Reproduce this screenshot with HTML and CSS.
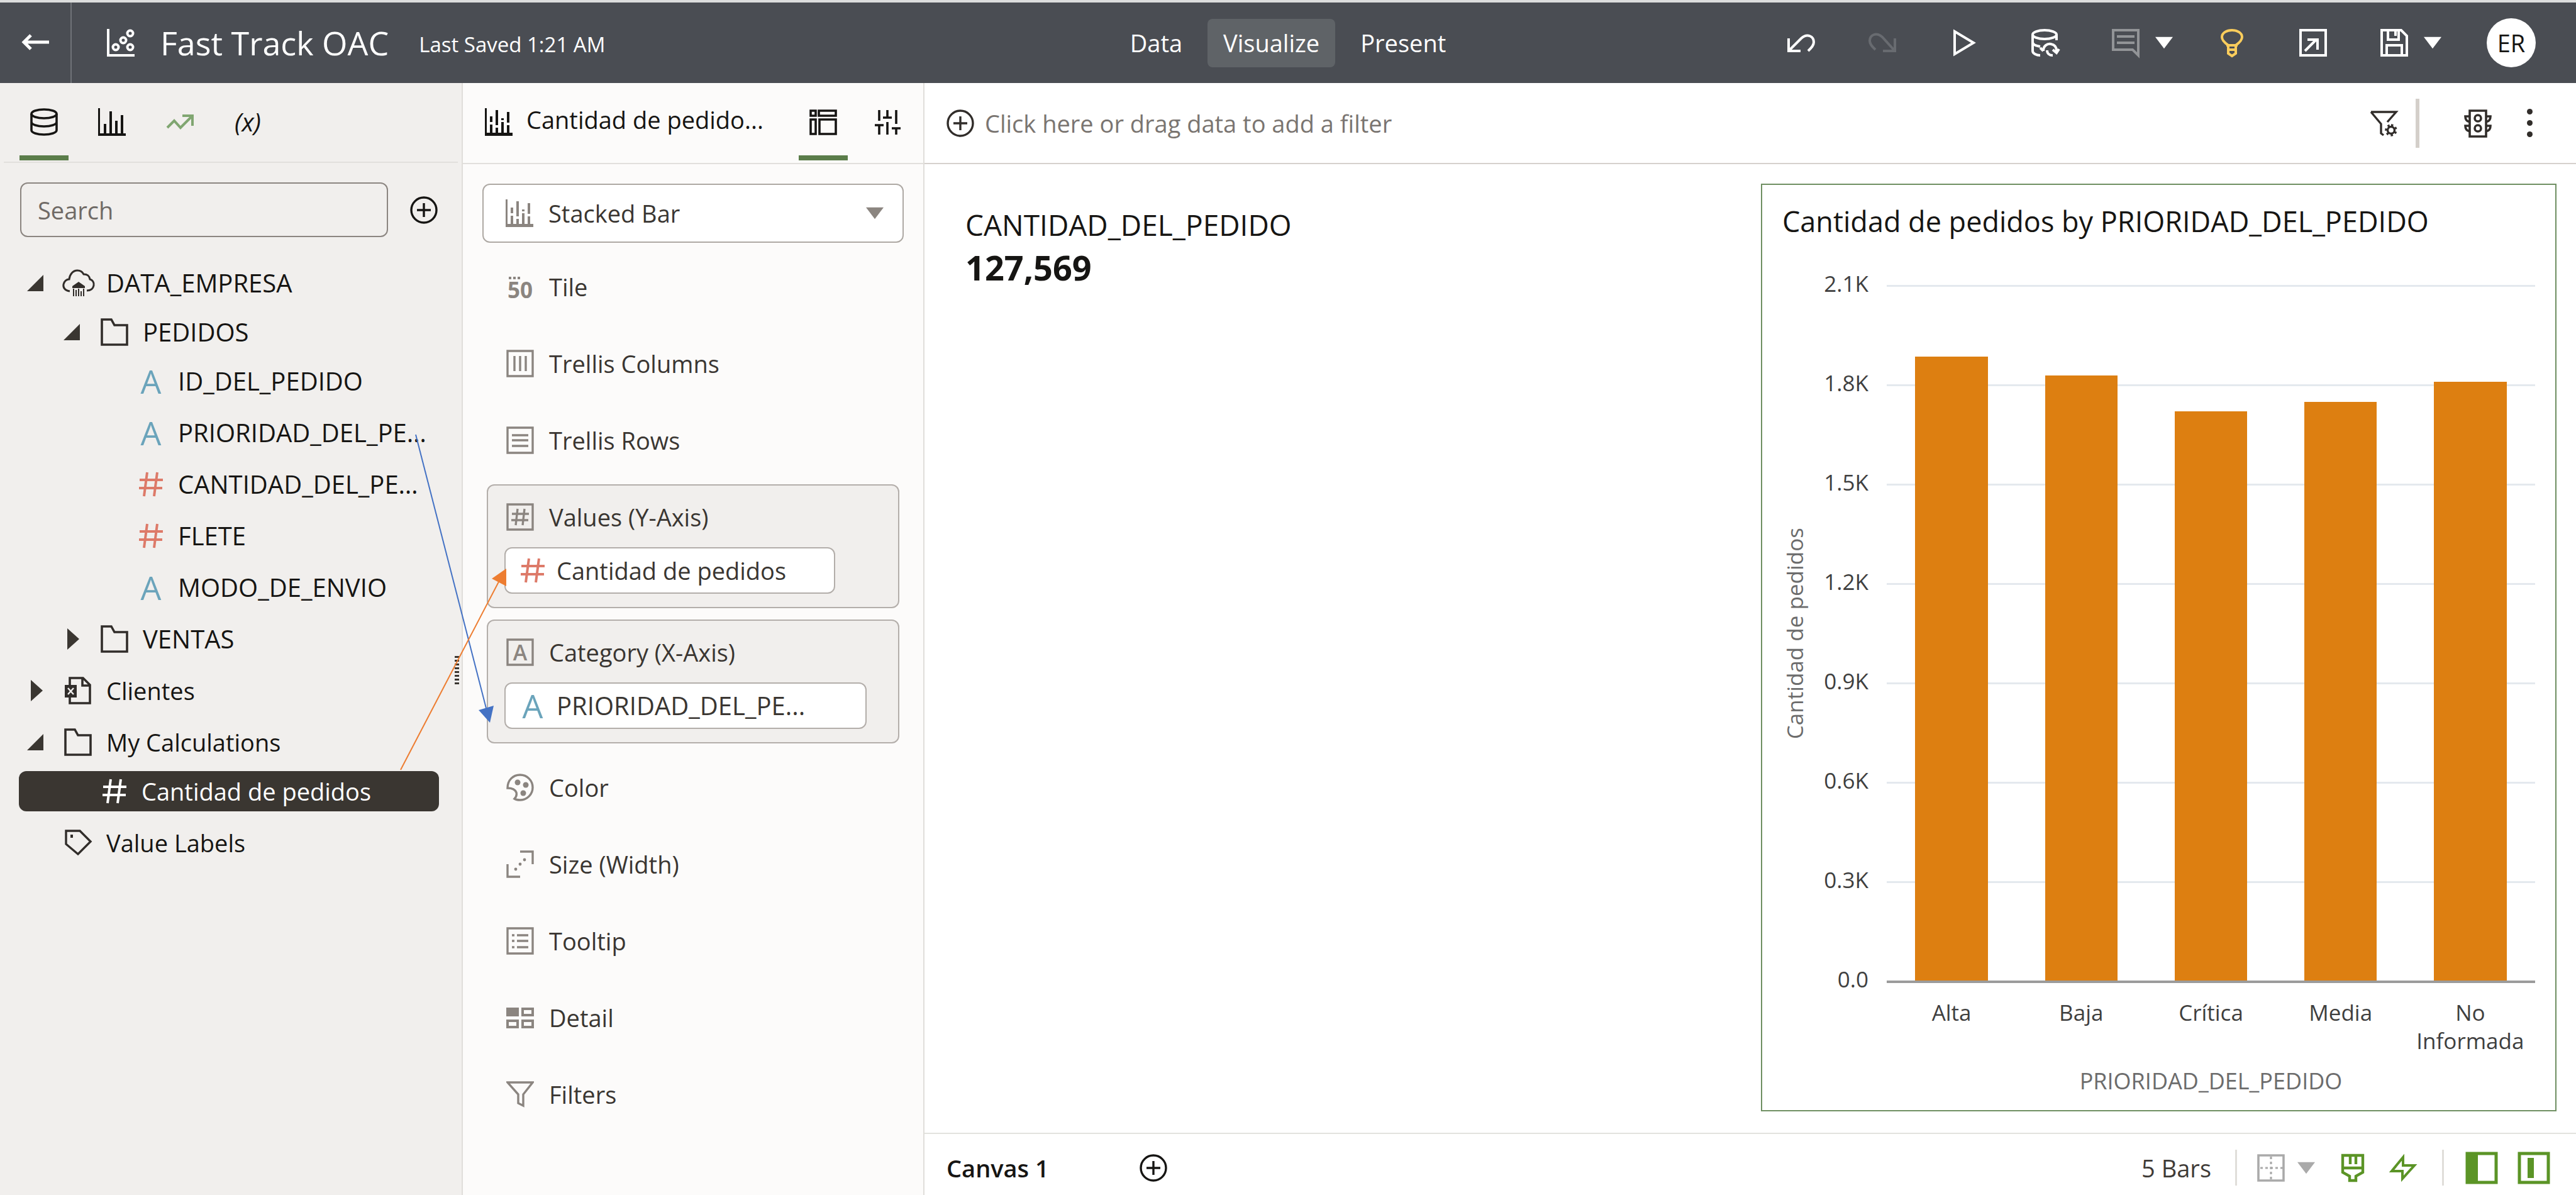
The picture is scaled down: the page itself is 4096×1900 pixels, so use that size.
FILE: index.html
```html
<!DOCTYPE html>
<html lang="en">
<head>
<meta charset="utf-8">
<title>Fast Track OAC</title>
<link rel="stylesheet" href="styles.css">
</head>
<body>
<svg class="sprite" aria-hidden="true">
  <symbol id="i-stacked" viewBox="0 0 44 44"><path fill="currentColor" d="M0 0h3v39h41v5H0zM8 13h4v9H8zM8 26h4v14H8zM17 3h4v24h-4zM17 31h4v9h-4zM26 16h4v3h-4zM26 22h4v18h-4zM35 6h4v17h-4zM35 27h4v13h-4z"/></symbol>
  <symbol id="i-bars" viewBox="0 0 44 44"><path fill="currentColor" d="M0 0h3v40h41v4H0zM9 25h4v16H9zM18 5h4v36h-4zM27 20h4v21h-4zM36 11h4v30h-4z"/></symbol>
  <symbol id="i-plus" viewBox="0 0 44 44"><g fill="none" stroke="currentColor" stroke-width="3.4"><circle cx="22" cy="22" r="20"/><path d="M22 11v22M11 22h22"/></g></symbol>
  <symbol id="i-folder" viewBox="0 0 44 44"><path fill="none" stroke="currentColor" stroke-width="3.6" d="M2 2h15l5 9h20v31H2z"/></symbol>
  <symbol id="i-hash" viewBox="0 0 40 40"><path fill="none" stroke="currentColor" stroke-width="4" d="M14 1 9 39M30 1l-5 38M2 13h37M1 26h37"/></symbol>
  <symbol id="i-open" viewBox="0 0 26 26"><path fill="currentColor" d="M26 0v26H0z"/></symbol>
  <symbol id="i-closed" viewBox="0 0 26 34"><path fill="currentColor" d="M6 0l19 17L6 34z"/></symbol>
  <symbol id="i-down" viewBox="0 0 30 20"><path fill="currentColor" d="M0 0h30L15 20z"/></symbol>
  <symbol id="i-funnel" viewBox="0 0 44 44"><path fill="none" stroke="currentColor" stroke-width="3.4" d="M2 3h40L27 22v18l-8-4V22z"/></symbol>
</svg>

<div class="app">
  <header class="topbar">
    <div class="topbar-left">
      <button class="back" aria-label="Back"><svg class="ic" viewBox="0 0 44 44"><path fill="none" stroke="currentColor" stroke-width="5" d="M15 10 4 21l11 11M3 21h41"/></svg></button>
      <svg class="ic topbar-logo" viewBox="0 0 44 44"><g fill="none" stroke="currentColor" stroke-width="4"><path d="M2 0v42h42"/><circle cx="14" cy="29" r="4.5"/><circle cx="26" cy="18" r="4.5"/><circle cx="37" cy="7" r="4.5"/><circle cx="37" cy="29" r="4.5"/></g></svg>
      <h1 class="title">Fast Track OAC</h1>
      <span class="saved">Last Saved 1:21 AM</span>
    </div>
    <nav class="modes">
      <button class="mode">Data</button>
      <button class="mode mode-on">Visualize</button>
      <button class="mode">Present</button>
    </nav>
    <div class="actions">
      <button aria-label="Undo"><svg class="ic" viewBox="0 0 44 44"><path fill="none" stroke="currentColor" stroke-width="4" d="M2 15v20h19M3 34 22 15c10-9 20-3 20 6 0 6-5 10-9 14"/></svg></button>
      <button class="dim" aria-label="Redo"><svg class="ic" viewBox="0 0 44 44"><path fill="none" stroke="currentColor" stroke-width="4" d="M42 15v20H23M41 34 22 13C12 4 2 10 2 19c0 6 5 10 9 14"/></svg></button>
      <button aria-label="Preview"><svg class="ic" viewBox="0 0 44 44"><path fill="none" stroke="currentColor" stroke-width="4" d="M8 4v36l30-18z"/></svg></button>
      <button aria-label="Refresh data"><svg class="ic" viewBox="0 0 44 44"><g fill="none" stroke="currentColor" stroke-width="4"><ellipse cx="22" cy="9" rx="19" ry="7"/><path d="M3 9v26c0 4 6 7 12 7M41 9v9M3 21c0 4 6 6 12 7M20 35c0-8 6-12 12-11 6 1 9 5 9 11M20 35l-5-5M35 33l6 5 4-6"/><path d="M26 34c0 5 4 8 9 8"/></g></svg></button>
      <div class="split">
        <button class="muted" aria-label="Notes"><svg class="ic" viewBox="0 0 44 44"><path fill="none" stroke="currentColor" stroke-width="4" d="M2 2h40v40l-9-9H2zM8 12h28M8 22h28"/></svg></button>
        <button aria-label="Notes menu"><svg class="caret"><use href="#i-down"/></svg></button>
      </div>
      <button class="bulb" aria-label="Insights"><svg class="ic" viewBox="0 0 44 44"><path fill="none" stroke="currentColor" stroke-width="4" d="M16 26C9 21 6 17 6 13 6 6 14 2 22 2s16 4 16 11c0 4-3 8-10 13v13l-6 4-6-4zM13 26h18M15 33h14"/></svg></button>
      <button aria-label="Export"><svg class="ic" viewBox="0 0 44 44"><path fill="none" stroke="currentColor" stroke-width="4" d="M2 2h40v40H2zM9 35l18-18M13 17h16v16"/></svg></button>
      <div class="split">
        <button aria-label="Save"><svg class="ic" viewBox="0 0 44 44"><path fill="none" stroke="currentColor" stroke-width="4" d="M2 2h31l9 9v31H2zM12 2v15h17V2M10 42V26h24v16M24 4v7"/></svg></button>
        <button aria-label="Save menu"><svg class="caret"><use href="#i-down"/></svg></button>
      </div>
      <button class="avatar">ER</button>
    </div>
  </header>

  <div class="work">
    <aside class="data-panel">
      <div class="tabbar tabbar-data">
        <button class="tab tab-on" aria-label="Data"><svg class="ic" viewBox="0 0 44 44"><g fill="none" stroke="currentColor" stroke-width="3.6"><ellipse cx="22" cy="9" rx="20" ry="7"/><path d="M2 9v26c0 4 9 7 20 7s20-3 20-7V9M2 22c0 4 9 7 20 7s20-3 20-7"/></g></svg></button>
        <button class="tab" aria-label="Visualizations"><svg class="ic"><use href="#i-bars"/></svg></button>
        <button class="tab tab-trend" aria-label="Analytics"><svg class="ic" viewBox="0 0 44 44"><path fill="none" stroke="currentColor" stroke-width="4" d="M2 31l11-11 10 11 18-18M26 12h16v16"/></svg></button>
        <button class="tab tab-fx">(x)</button>
      </div>
      <div class="search">
        <input class="search-box" type="text" placeholder="Search" aria-label="Search">
        <button aria-label="Add data"><svg class="ic"><use href="#i-plus"/></svg></button>
      </div>
      <ul class="tree">
        <li>
          <div class="node"><svg class="tw"><use href="#i-open"/></svg><svg class="nic nic-cloud" viewBox="0 0 52 44"><path fill="none" stroke="currentColor" stroke-width="3" d="M12 35C4 34 1 29 2 24c1-5 5-8 9-8 1-8 6-14 13-14 5 0 8 2 10 6 7 0 9 3 10 8 4 1 7 5 6 10-1 5-5 8-11 8"/><path fill="currentColor" d="M26 20l10 7v3H16v-3zM17 31h2v12h-2zM21 33h2v10h-2zM25 31h2v12h-2zM29 35h2v8h-2zM33 31h2v12h-2z"/></svg><span class="caps">DATA_EMPRESA</span></div>
          <ul class="sub">
            <li>
              <div class="node lv1"><svg class="tw"><use href="#i-open"/></svg><svg class="nic"><use href="#i-folder"/></svg><span class="caps">PEDIDOS</span></div>
              <ul class="sub">
                <li class="node lv2"><span class="nic attr">A</span><span class="caps">ID_DEL_PEDIDO</span></li>
                <li class="node lv2"><span class="nic attr">A</span><span class="caps">PRIORIDAD_DEL_PE…</span></li>
                <li class="node lv2"><svg class="nic meas"><use href="#i-hash"/></svg><span class="caps">CANTIDAD_DEL_PE…</span></li>
                <li class="node lv2"><svg class="nic meas"><use href="#i-hash"/></svg><span class="caps">FLETE</span></li>
                <li class="node lv2"><span class="nic attr">A</span><span class="caps">MODO_DE_ENVIO</span></li>
              </ul>
            </li>
            <li class="node lv1"><svg class="tw"><use href="#i-closed"/></svg><svg class="nic"><use href="#i-folder"/></svg><span class="caps">VENTAS</span></li>
          </ul>
        </li>
        <li class="node"><svg class="tw"><use href="#i-closed"/></svg><svg class="nic" viewBox="0 0 44 44"><path fill="none" stroke="currentColor" stroke-width="3.6" d="M9 14V2h21l11 11v29H9V30M29 2v12h12"/><path fill="currentColor" d="M1 13h19v20H1z"/><path stroke="#f1efed" stroke-width="2.5" d="M6 18l9 10M15 18 6 28"/></svg><span>Clientes</span></li>
        <li>
          <div class="node"><svg class="tw"><use href="#i-open"/></svg><svg class="nic"><use href="#i-folder"/></svg><span>My Calculations</span></div>
          <ul class="sub">
            <li class="node node-on"><svg class="nic meas"><use href="#i-hash"/></svg><span>Cantidad de pedidos</span></li>
          </ul>
        </li>
        <li class="node leaf"><svg class="nic" viewBox="0 0 44 44"><path fill="none" stroke="currentColor" stroke-width="3.4" d="M3 3h22l17 17-20 20L3 24z"/><path fill="currentColor" d="M10 9h4v5h-4z"/></svg><span>Value Labels</span></li>
      </ul>
      <div class="grip"></div>
    </aside>

    <section class="grammar-panel">
      <div class="tabbar tabbar-viz">
        <svg class="ic"><use href="#i-stacked"/></svg>
        <h2 class="viz-name">Cantidad de pedido...</h2>
        <button class="tab tab-on" aria-label="Grammar"><svg class="ic" viewBox="0 0 44 44"><g fill="none" stroke="currentColor" stroke-width="3.6"><path d="M2 4h8v8H2zM15 4h27v8H15zM2 18h8v23H2zM16 18h26v23H16z"/></g></svg></button>
        <button class="tab" aria-label="Properties"><svg class="ic" viewBox="0 0 44 44"><path fill="none" stroke="currentColor" stroke-width="3.6" d="M9 3v17M9 26v16M2 27h14M22 3v12M15 15h14M22 22v20M36 3v22M36 32v10M29 32h14"/></svg></button>
      </div>
      <label class="viz-type">
        <svg class="ic grey"><use href="#i-stacked"/></svg>
        <select class="viz-select" aria-label="Visualization type"><option>Stacked Bar</option></select>
        <svg class="caret grey"><use href="#i-down"/></svg>
      </label>
      <ul class="grammar">
        <li class="slot"><svg class="ic grey" viewBox="0 0 44 44"><text class="tile-glyph" x="2" y="40">50</text><path fill="currentColor" d="M4 6h4v4H4zM11 6h4v4h-4zM18 6h4v4h-4z"/></svg><span>Tile</span></li>
        <li class="slot"><svg class="ic grey" viewBox="0 0 44 44"><path fill="none" stroke="currentColor" stroke-width="3.4" d="M2 2h40v40H2zM13 10v24M22 10v24M31 10v24"/></svg><span>Trellis Columns</span></li>
        <li class="slot"><svg class="ic grey" viewBox="0 0 44 44"><path fill="none" stroke="currentColor" stroke-width="3.4" d="M2 2h40v40H2zM9 14h26M9 22h26M9 31h26"/></svg><span>Trellis Rows</span></li>
        <li class="well">
          <div class="well-name"><svg class="ic grey" viewBox="0 0 44 44"><path fill="none" stroke="currentColor" stroke-width="3.4" d="M2 2h40v40H2zM18 9l-3 26M29 9l-3 26M9 17h27M8 27h27"/></svg><span>Values (Y-Axis)</span></div>
          <div class="chip chip-a"><svg class="nic meas"><use href="#i-hash"/></svg><span>Cantidad de pedidos</span></div>
        </li>
        <li class="well">
          <div class="well-name"><svg class="ic grey" viewBox="0 0 44 44"><path fill="none" stroke="currentColor" stroke-width="3.4" d="M2 2h40v40H2z"/><text class="box-glyph" x="22" y="35">A</text></svg><span>Category (X-Axis)</span></div>
          <div class="chip chip-b"><span class="nic attr">A</span><span class="caps">PRIORIDAD_DEL_PE...</span></div>
        </li>
        <li class="slot"><svg class="ic grey" viewBox="0 0 44 44"><path fill="none" stroke="currentColor" stroke-width="3.4" d="M2 23C2 10 11 2 22 2s20 9 20 20-9 20-20 20c-3 0-6 0-9-2 3-3 4-6 3-10-2-5-8-7-14-7z"/><g fill="currentColor"><circle cx="18" cy="14" r="4.5"/><circle cx="31" cy="18" r="4.5"/><circle cx="27" cy="31" r="4.5"/></g></svg><span>Color</span></li>
        <li class="slot"><svg class="ic grey" viewBox="0 0 44 44"><path fill="none" stroke="currentColor" stroke-width="3.4" d="M2 22v20h20M22 2h20v20"/><g fill="currentColor"><circle cx="15" cy="30" r="2.4"/><circle cx="22" cy="22" r="2.4"/><circle cx="29" cy="15" r="2.4"/></g></svg><span>Size (Width)</span></li>
        <li class="slot"><svg class="ic grey" viewBox="0 0 44 44"><path fill="none" stroke="currentColor" stroke-width="3.4" d="M2 2h40v40H2zM9 13h4M17 13h18M9 22h4M17 22h18M9 32h4M17 32h18"/></svg><span>Tooltip</span></li>
        <li class="slot"><svg class="ic grey" viewBox="0 0 44 44"><path fill="currentColor" d="M0 6h20v14H0z"/><path fill="none" stroke="currentColor" stroke-width="4" d="M26 8h16v10H26zM2 27h16v10H2zM26 27h16v10H26z"/></svg><span>Detail</span></li>
        <li class="slot"><svg class="ic grey"><use href="#i-funnel"/></svg><span>Filters</span></li>
      </ul>
    </section>

    <main class="stage">
      <div class="filterbar">
        <button class="add-filter"><svg class="ic"><use href="#i-plus"/></svg><span>Click here or drag data to add a filter</span></button>
        <button aria-label="Filter settings"><svg class="ic" viewBox="0 0 44 44"><g fill="none" stroke="currentColor" stroke-width="3.4"><path d="M2 4h40L28 20M2 4l16 19v15l4 3"/><circle cx="34" cy="33" r="5.5"/><path stroke-dasharray="3.4 3.9" d="M34 25a8 8 0 1 1-.1 0"/></g></svg></button>
        <span class="rule-thick"></span>
        <button class="traffic" aria-label="Canvas interactions"><svg class="ic" viewBox="0 0 44 44"><g fill="none" stroke="currentColor" stroke-width="3.6"><path d="M9 2h26v41H9zM9 11H2c0 5 2 8 7 9M35 11h7c0 5-2 8-7 9M9 26H2c0 5 2 8 7 9M35 26h7c0 5-2 8-7 9"/><circle cx="22" cy="14" r="5"/><circle cx="22" cy="30" r="5"/></g></svg></button>
        <button class="kebab" aria-label="More"><i></i><i></i><i></i></button>
      </div>

      <div class="canvas">
        <section class="kpi">
          <div class="kpi-name">CANTIDAD_DEL_PEDIDO</div>
          <div class="kpi-value">127,569</div>
        </section>
        <section class="card">
          <h3 class="card-title">Cantidad de pedidos by PRIORIDAD_DEL_PEDIDO</h3>
          <div class="chart">
            <div class="y-title">Cantidad de pedidos</div>
            <div class="plot">
              <div class="tick"><span>2.1K</span><i></i></div>
              <div class="tick"><span>1.8K</span><i></i></div>
              <div class="tick"><span>1.5K</span><i></i></div>
              <div class="tick"><span>1.2K</span><i></i></div>
              <div class="tick"><span>0.9K</span><i></i></div>
              <div class="tick"><span>0.6K</span><i></i></div>
              <div class="tick"><span>0.3K</span><i></i></div>
              <div class="tick tick-zero"><span>0.0</span><i></i></div>
              <div class="bars">
                <div class="bar" style="height:89.8%"></div>
                <div class="bar" style="height:87.1%"></div>
                <div class="bar" style="height:81.9%"></div>
                <div class="bar" style="height:83.3%"></div>
                <div class="bar" style="height:86.2%"></div>
              </div>
            </div>
            <div class="cats"><span>Alta</span><span>Baja</span><span>Crítica</span><span>Media</span><span>No Informada</span></div>
            <div class="x-title">PRIORIDAD_DEL_PEDIDO</div>
          </div>
        </section>
      </div>

      <footer class="foot">
        <button class="canvas-tab">Canvas 1</button>
        <button aria-label="Add canvas"><svg class="ic"><use href="#i-plus"/></svg></button>
        <span class="count">5 Bars</span>
        <span class="rule"></span>
        <div class="foot-tools">
          <button class="off" aria-label="Grid"><svg class="ic" viewBox="0 0 44 44"><path fill="none" stroke="currentColor" stroke-width="3.6" d="M2 2h40v40H2z"/><path stroke="currentColor" stroke-width="3.2" stroke-dasharray="4 4" d="M22 4v38M5 22h36"/></svg></button>
          <button class="off" aria-label="Grid menu"><svg class="caret"><use href="#i-down"/></svg></button>
        </div>
        <button class="green" aria-label="Brush"><svg class="ic" viewBox="0 0 44 44"><path fill="none" stroke="currentColor" stroke-width="4.4" d="M6 2h32v27l-11 6v7H17v-7L6 29zM6 22h32M18 2v14M27 2v14"/></svg></button>
        <button class="green" aria-label="Auto apply"><svg class="ic" viewBox="0 0 44 44"><path fill="none" stroke="currentColor" stroke-width="4" d="M22 5 4 27h17v12l19-21H22z"/></svg></button>
        <span class="rule rule-last"></span>
        <button class="green" aria-label="Data panel"><svg class="ic-lg" viewBox="0 0 52 52"><path fill="none" stroke="currentColor" stroke-width="5" d="M3 3h46v46H3z"/><path fill="currentColor" d="M2 2h18v48H2z"/></svg></button>
        <button class="green" aria-label="Grammar panel"><svg class="ic-lg" viewBox="0 0 52 52"><path fill="none" stroke="currentColor" stroke-width="5" d="M3 3h46v46H3z"/><path fill="currentColor" d="M16 10h10v32H16z"/></svg></button>
      </footer>
    </main>
  </div>

  <svg class="arrows" viewBox="0 0 900 1300" aria-hidden="true">
    <path stroke="#4472c4" stroke-width="2" d="M661 691 773 1126"/><path fill="#4472c4" d="M761 1129l24-7-6 27z"/>
    <path stroke="#ed7d31" stroke-width="2" d="M637 1224 793 925"/><path fill="#ed7d31" d="M805 904l-23 16 23 12z"/>
  </svg>
</div>
</body>
</html>
```
FILE: styles.css
```css
* { box-sizing: border-box; }
body {
  margin: 0;
  font-family: "Open Sans", "Noto Sans", sans-serif;
  font-size: 38px;
  line-height: 48px;
  color: #161513;
  background: #fff;
}
button {
  display: flex;
  align-items: center;
  justify-content: center;
  padding: 0;
  border: 0;
  background: none;
  color: inherit;
  font: inherit;
}
svg { overflow: visible; }
ul { margin: 0; padding: 0; list-style: none; }
h1, h2, h3 { margin: 0; font-weight: 400; }
.sprite { position: absolute; width: 0; height: 0; overflow: hidden; }
.app {
  position: relative;
  display: flex;
  flex-direction: column;
  min-height: 100vh;
}
.ic { flex: none; width: 44px; height: 44px; }
.ic-lg { width: 52px; height: 52px; }
.caret { flex: none; width: 28px; height: 20px; }
.grey { color: #8b8580; }
.caps { font-size: 40px; }

/* top bar */
.topbar {
  display: grid;
  grid-template-columns: 1fr auto 1fr;
  height: 132px;
  border-top: 4px solid #dcdddd;
  background: #4a4d53;
  color: #fff;
}
.topbar-left { display: flex; align-items: center; }
.back {
  align-self: stretch;
  width: 114px;
  border-right: 2px solid #707378;
}
.topbar-logo { margin: 0 41px 0 56px; }
.title { font-size: 52px; }
.saved { margin-left: 48px; font-size: 33px; padding-top: 6px; }
.modes { display: flex; align-items: center; gap: 15px; }
.mode { height: 77px; padding: 0 25px; border-radius: 8px; }
.mode-on { background: #5f6367; }
.actions {
  display: flex;
  align-items: center;
  justify-content: flex-end;
  gap: 85px;
  padding-right: 64px;
}
.split { display: flex; align-items: center; gap: 25px; margin-right: -13px; }
.dim { color: #686b70; }
.muted { color: #929497; }
.bulb { color: #fbcd5c; }
.avatar {
  width: 78px;
  height: 78px;
  border-radius: 50%;
  background: #fff;
  color: #161513;
}

/* panels */
.work { display: flex; flex: 1; }
.tabbar { display: flex; align-items: center; border-bottom: 2px solid #e2e0dd; }
.tab {
  width: 78px;
  align-self: stretch;
  border-top: 8px solid transparent;
  border-bottom: 8px solid transparent;
}
.tab-on { border-bottom-color: #5b7d4a; }
.data-panel {
  position: relative;
  display: flex;
  flex-direction: column;
  flex: none;
  width: 736px;
  border-right: 2px solid #e0deda;
  background: #f1efed;
}
.tabbar-data { height: 127px; margin: 0 6px; padding: 0 0 2px 25px; gap: 30px; }
.tab-trend { color: #80a671; }
.tab-fx { font-size: 40px; font-style: italic; }
.search { display: flex; align-items: center; gap: 35px; padding: 31px 38px 41px 32px; }
.search-box {
  flex: 1;
  min-width: 0;
  height: 87px;
  padding: 0 26px;
  border: 2px solid #8b8580;
  border-radius: 12px;
  background: none;
  color: #161513;
  font: inherit;
}
.search-box::placeholder { color: #6f6a66; opacity: 1; }
.tree { padding: 0 36px 0 30px; }
.tree, .tree ul, .tree li:not(.node) { display: flex; flex-direction: column; gap: 18px; }
.tree .sub { margin-top: -4px; }
.node {
  display: flex;
  align-items: center;
  height: 64px;
  padding-left: 13px;
  border-radius: 12px;
  white-space: nowrap;
}
.tw { flex: none; width: 26px; height: 34px; margin-right: 33px; color: #3a3631; }
.nic { flex: none; width: 44px; height: 44px; margin-right: 23px; color: #312d2a; }
.nic-cloud { width: 52px; margin: 0 18px 0 -3px; }
.leaf { padding-left: 72px; }
.lv1 { padding-left: 71px; }
.lv2 { padding-left: 190px; }
.attr, .meas { width: 40px; height: 40px; }
.attr {
  font-size: 52px;
  line-height: 40px;
  text-align: center;
}
.nic.attr { color: #6ba4bb; }
.nic.meas { color: #dd7a69; }
.node-on { padding-left: 132px; background: #3a3631; color: #fff; }
.node-on .nic.meas { color: #fff; }
.grip {
  position: absolute;
  left: 723px;
  top: 911px;
  width: 7px;
  height: 48px;
  background: repeating-linear-gradient(#3a3631 0 3px, transparent 3px 6px);
}

/* grammar */
.grammar-panel {
  flex: none;
  width: 734px;
  border-right: 2px solid #e0deda;
  background: #fcfbfa;
}
.tabbar-viz { height: 129px; padding: 0 18px 4px 35px; }
.tabbar-viz .tab + .tab { margin-left: 24px; }
.viz-name { flex: 1; margin-left: 22px; padding-bottom: 8px; font-size: 38px; }
.viz-type {
  display: flex;
  align-items: center;
  height: 94px;
  margin: 31px 31px 9px;
  padding: 0 30px 0 35px;
  border: 2px solid #aea9a4;
  border-radius: 12px;
  background: #fff;
}
.viz-select {
  flex: 1;
  margin-left: 24px;
  padding: 0;
  border: 0;
  appearance: none;
  background: none;
  color: #3a3632;
  font: inherit;
}
.grammar { display: flex; flex-direction: column; color: #3a3632; }
.slot { display: flex; align-items: center; gap: 24px; height: 122px; padding-left: 69px; }
.well {
  margin: 9px 38px;
  padding: 26px 0 21px 26px;
  border: 2px solid #b3aeaa;
  border-radius: 12px;
  background: #f1efed;
}
.well-name { display: flex; align-items: center; gap: 24px; padding-left: 3px; }
.chip {
  display: flex;
  align-items: center;
  height: 74px;
  margin-top: 24px;
  padding-left: 23px;
  border: 2px solid #b3aeaa;
  border-radius: 12px;
  background: #fff;
  white-space: nowrap;
}
.chip .nic { margin-right: 18px; }
.chip-a { width: 84%; }
.chip-b { width: 92%; }
.tile-glyph { font-size: 35px; font-weight: 700; fill: currentColor; }
.box-glyph { font-size: 34px; font-weight: 600; fill: currentColor; text-anchor: middle; }

/* stage */
.stage { display: flex; flex-direction: column; flex: 1; min-width: 0; }
.filterbar {
  display: flex;
  align-items: center;
  height: 129px;
  padding: 0 69px 0 35px;
  border-bottom: 2px solid #d6d1cd;
  color: #312d2a;
}
.add-filter { gap: 17px; margin-right: auto; }
.add-filter span { color: #7a7571; }
.rule-thick { width: 6px; height: 78px; margin: 0 71px 0 29px; background: #d4cfca; }
.kebab { flex-direction: column; gap: 9px; margin-left: 56px; }
.kebab i { width: 9px; height: 9px; border-radius: 50%; background: #312d2a; }
.canvas {
  display: grid;
  grid-template-columns: 1fr 1fr;
  flex: 1;
  padding: 31px 31px 34px 65px;
}
.kpi { padding-top: 35px; }
.kpi-name { font-size: 46px; line-height: 60px; }
.kpi-value { font-size: 54px; line-height: 76px; font-weight: 700; }
.card {
  display: flex;
  flex-direction: column;
  padding: 28px 32px 22px 27px;
  border: 2px solid #6f8f62;
}
.card-title { margin: 0 0 48px 5px; font-size: 45px; line-height: 60px; }
.chart {
  display: grid;
  grid-template-columns: 48px 1fr;
  grid-template-rows: 1fr auto auto;
  flex: 1;
  font-size: 35px;
  line-height: 45px;
  color: #3f3f3f;
}
.y-title {
  justify-self: center;
  align-self: center;
  writing-mode: vertical-rl;
  transform: rotate(180deg);
  color: #6c6c6c;
}
.plot { position: relative; display: flex; flex-direction: column; justify-content: space-between; }
.tick { display: flex; align-items: center; gap: 29px; height: 48px; }
.tick span { width: 94px; padding-bottom: 8px; text-align: right; }
.tick i { flex: 1; height: 3px; background: #e4e9ee; }
.tick-zero i { height: 4px; background: #9b9b9b; z-index: 1; }
.bars {
  position: absolute;
  inset: 24px 0 24px 123px;
  display: grid;
  grid-template-columns: repeat(5, 1fr);
  align-items: end;
  justify-items: center;
}
.bar { width: 56%; background: #dd7f11; }
.cats {
  grid-column: 2;
  display: grid;
  grid-template-columns: repeat(5, 1fr);
  margin: 2px 0 0 123px;
  text-align: center;
}
.x-title {
  grid-column: 2;
  margin: 18px 0 0 123px;
  font-size: 36px;
  line-height: 48px;
  text-align: center;
  color: #6c6c6c;
}

/* footer */
.foot {
  display: flex;
  align-items: center;
  height: 99px;
  padding: 10px 41px 0 35px;
  border-top: 2px solid #e2e2de;
}
.canvas-tab { width: 307px; justify-content: flex-start; font-weight: 600; }
.count { margin-left: auto; color: #3f3b37; }
.rule { width: 3px; height: 57px; margin: 0 32px 0 38px; background: #e0deda; }
.rule-last { margin: 0 34px 0 40px; }
.foot-tools { display: flex; gap: 20px; margin-right: 38px; }
.off { color: #aaa; }
.green { color: #5b9426; }
.green + .green { margin-left: 36px; }
.rule-last + .green + .green { margin-left: 31px; }

.arrows { position: absolute; left: 0; top: 0; width: 900px; height: 1300px; pointer-events: none; }
```
